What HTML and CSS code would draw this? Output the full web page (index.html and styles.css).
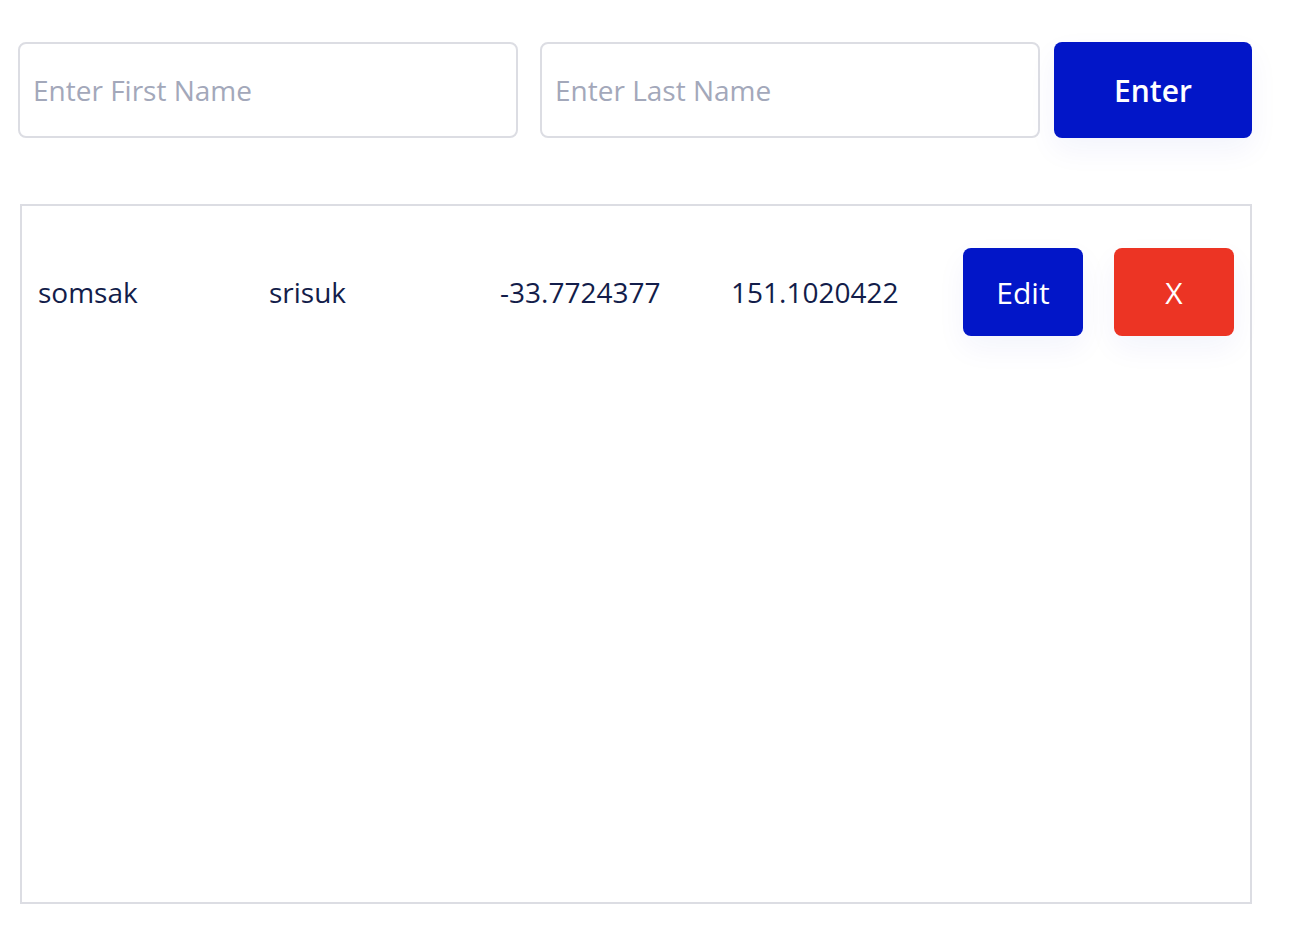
FILE: index.html
```html
<!DOCTYPE html>
<html>
<head>
<meta charset="utf-8">
<link rel="stylesheet" href="styles.css">
</head>
<body>
<div class="page">
  <form class="entry">
    <input class="field field-first" type="text" placeholder="Enter First Name">
    <input class="field field-last" type="text" placeholder="Enter Last Name">
    <button class="btn btn-enter" type="button">Enter</button>
  </form>
  <div class="list">
    <div class="row">
      <span class="cell">somsak</span>
      <span class="cell">srisuk</span>
      <span class="cell">-33.7724377</span>
      <span class="cell">151.1020422</span>
      <span class="cell cell-btn"><button class="btn btn-edit" type="button">Edit</button></span>
      <span class="cell cell-btn"><button class="btn btn-del" type="button">X</button></span>
    </div>
  </div>
</div>
</body>
</html>
```
FILE: styles.css
```css
* { box-sizing: border-box; }
html, body { margin: 0; padding: 0; background: #ffffff; }
body { font-family: "Open Sans", "Noto Sans", sans-serif; color: #131d4a; }
.page { padding: 42px 0 0 18px; }
.entry { display: flex; align-items: stretch; height: 96px; margin: 0; }
.field {
  width: 500px; height: 96px;
  border: 2px solid #dcdde3; border-radius: 8px;
  padding: 0 13px;
  font-family: "Open Sans", "Noto Sans", sans-serif;
  font-size: 28px; color: #131d4a; background: #fff; outline: none;
}
.field::placeholder { color: #a3a8ba; }
.field-last { margin-left: 22px; }
.btn {
  border: none; border-radius: 8px; cursor: pointer;
  font-family: "Open Sans", "Noto Sans", sans-serif;
  color: #ffffff; font-weight: 600;
  box-shadow: 0 12px 30px rgba(20, 30, 200, 0.05);
}
.btn-enter {
  margin-left: 14px; width: 198px; height: 96px;
  background: #0216c8; font-size: 30px;
}
.list {
  margin: 66px 0 0 2px;
  width: 1232px; height: 700px;
  border: 2px solid #dcdde3;
  padding: 42px 0 0 16px;
}
.row { display: grid; grid-template-columns: 231px 231px 231px 232px 151px 120px; align-items: center; height: 88px; }
.cell { font-size: 28px; color: #131d4a; line-height: 1; }
.btn-edit, .btn-del { width: 120px; height: 88px; font-size: 30px; font-weight: 500; }
.btn-edit { background: #0216c8; }
.btn-del { background: #ec3424; }
```
